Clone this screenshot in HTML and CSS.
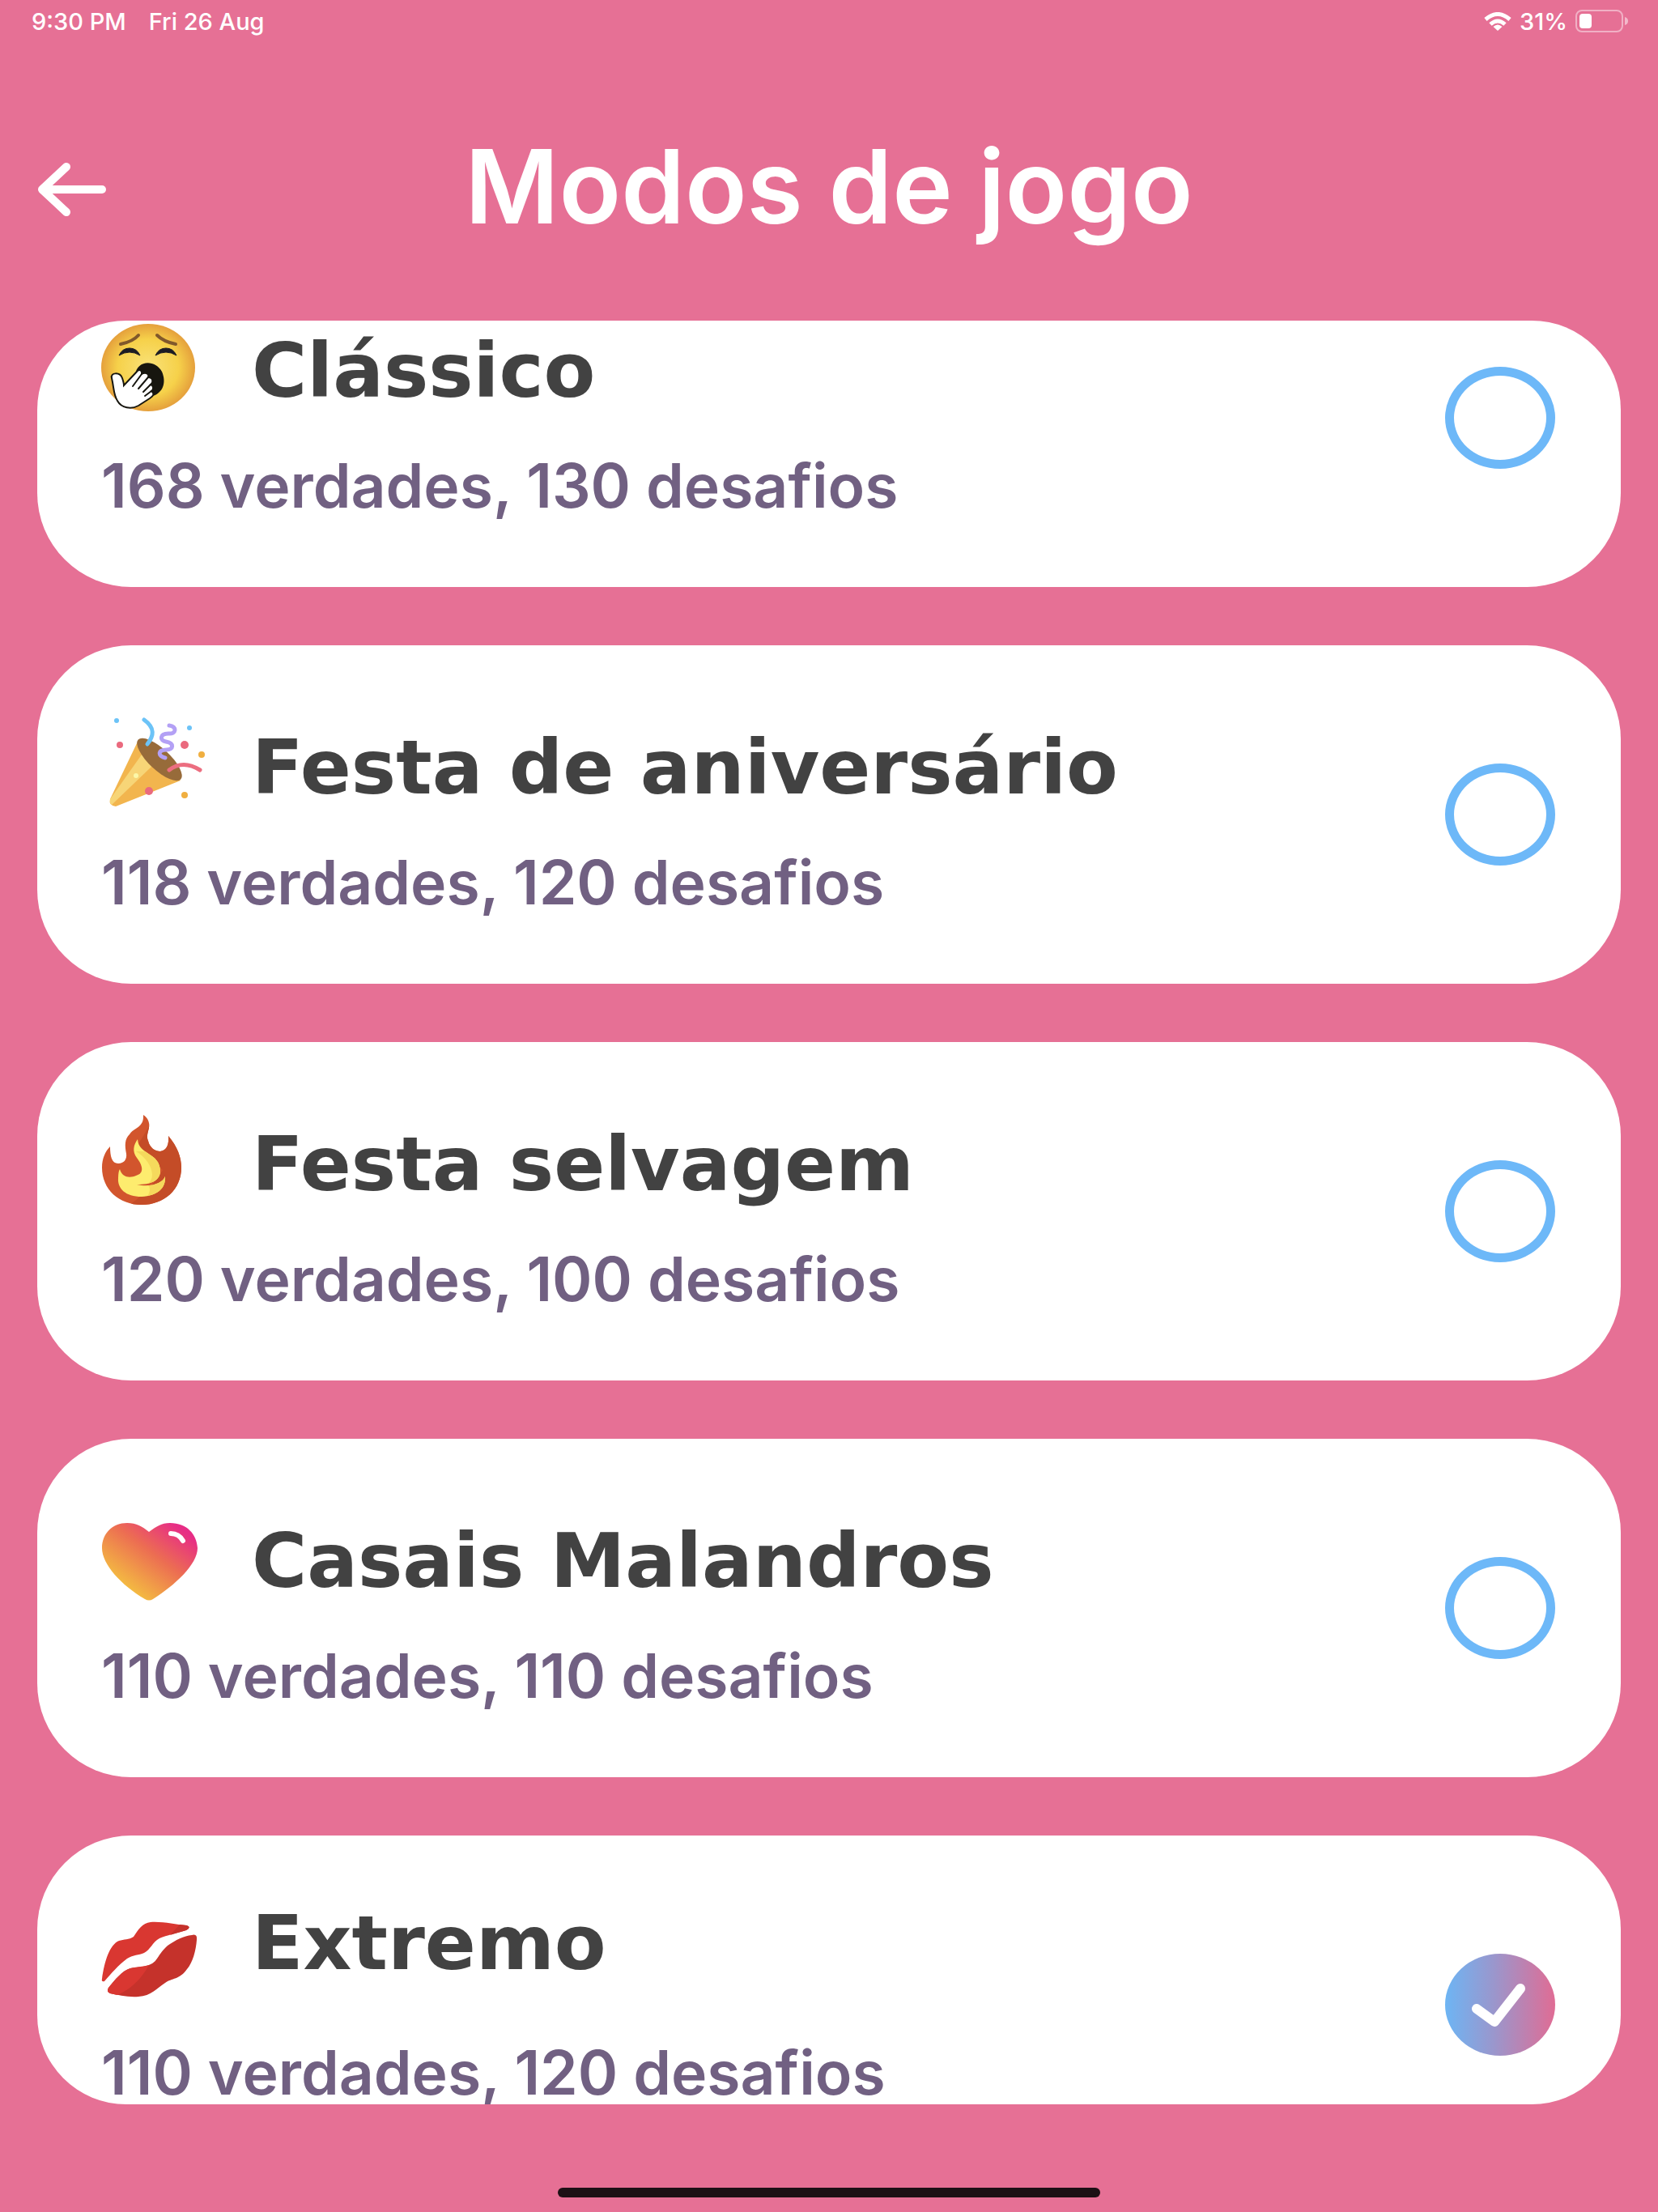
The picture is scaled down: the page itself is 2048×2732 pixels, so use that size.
FILE: index.html
```html
<!DOCTYPE html>
<html lang="pt">

<head>
    <meta charset="UTF-8"/>
    <meta name="viewport" content="width=device-width, initial-scale=1.0"/>
    <title>Modos de jogo</title>
    <link rel="stylesheet" href="styles.css">
</head>

<body>
<div class="status-bar">
    <div class="status-left">
        <span>9:30 PM</span>
        <span>Fri 26 Aug</span>
    </div>
    <div class="status-right">
        <svg class="wifi" viewBox="0 0 34 23" fill="none" stroke="#fff" stroke-width="5">
            <path d="M2 9 Q17 -4 32 9"/>
            <path d="M8 15 Q17 7 26 15"/>
            <path d="M17 23 L11.500 18 Q17 13 22.500 18 Z" fill="#fff" stroke="none"/>
        </svg>
        <span>31%</span>
        <svg class="battery" viewBox="0 0 66 28">
            <rect x="1" y="1" width="57" height="26" rx="7" fill="none" stroke="#fff" stroke-opacity=".45" stroke-width="2"/>
            <rect x="5" y="5" width="15" height="18" rx="4" fill="#fff"/>
            <path d="M61 9 Q65 10 65 14 Q65 18 61 19 Z" fill="#fff" fill-opacity=".5"/>
        </svg>
    </div>
</div>

<header class="header">
    <button class="back" aria-label="Voltar">
        <svg viewBox="0 0 86 68" fill="none" stroke="#fff" stroke-width="10" stroke-linecap="round" stroke-linejoin="round">
            <path d="M36 6 L6 34 L36 62"/>
            <path d="M8 34 H80"/>
        </svg>
    </button>
    <h1>Modos de jogo</h1>
</header>

<main class="modes">
    <label class="mode">
        <span class="mode-info">
            <span class="mode-head">
                <svg class="mode-icon" viewBox="0 0 120 112">
                    <defs>
                        <radialGradient id="face">
                            <stop offset="0" stop-color="#f9e27a"/>
                            <stop offset=".65" stop-color="#f6d14a"/>
                            <stop offset="1" stop-color="#e5a03c"/>
                        </radialGradient>
                    </defs>
                    <ellipse cx="58" cy="57" rx="58" ry="54" fill="url(#face)"/>
                    <g fill="none" stroke="#80582b" stroke-width="4" stroke-linecap="round">
                        <path d="M24 28 Q39 25 46 17"/>
                        <path d="M92 28 Q77 25 69 17"/>
                    </g>
                    <path d="M22 42 Q26 33 35 33 Q44 33 48 42 Q35 34 22 42 Z" fill="#1c1c24" stroke="#1c1c24" stroke-width="1"/>
                    <path d="M67 42 Q71 33 80 33 Q89 33 93 42 Q80 34 67 42 Z" fill="#1c1c24" stroke="#1c1c24" stroke-width="1"/>
                    <path d="M42 66 C44 47 67 47 75 62 C81 76 76 88 64 92 L48 98 Z" fill="#17160f"/>
                    <path d="M13 70 C11 63 23 62 26 70 Q28 76 28 79 L44 62 C47 58 51 61 50 65 C55 62 60 65 58 69 C64 69 65 75 61 78 C65 79 65 84 62 86 C66 89 65 92 60 95 L46 104 C37 109 25 107 20 98 C15 90 16 83 13 70 Z" fill="#fff" stroke="#17160f" stroke-width="2"/>
                    <path d="M50 65 L39 80 M58 69 L46 83 M61 78 L52 87 M62 86 L54 92" fill="none" stroke="#17160f" stroke-width="2" stroke-linecap="round"/>
                </svg>
                <span class="mode-title">Clássico</span>
            </span>
            <span class="mode-count">168 verdades, 130 desafios</span>
        </span>
        <span class="mode-check"><input type="radio" name="mode"></span>
    </label>

    <label class="mode">
        <span class="mode-info">
            <span class="mode-head">
                <svg class="mode-icon" viewBox="0 0 120 112">
                    <path d="M45 29 L11 100 Q9 108 18 109 L98 77 Z" fill="#f2b54e"/>
                    <path d="M50 45 L62 60 L13 107 Q10 105 11 100 Z" fill="#f7d577"/>
                    <ellipse cx="72" cy="51" rx="36" ry="13" transform="rotate(43 72 51)" fill="#976b3a"/>
                    <g fill="none" stroke-width="5" stroke-linecap="round">
                        <path d="M53 2 C67 12 65 22 57 32" stroke="#6cc3f7"/>
                        <path d="M84 9 C94 10 93 20 83 19 C72 19 72 28 80 29 C91 31 89 39 81 39 C69 39 70 47 79 49" stroke="#b3a0f5"/>
                        <path d="M84 64 Q101 51 122 64" stroke="#ec6e80"/>
                    </g>
                    <circle cx="19" cy="3" r="3" fill="#6cc3f7"/>
                    <circle cx="109" cy="12" r="3" fill="#6cc3f7"/>
                    <circle cx="23" cy="33" r="4" fill="#ea6a7e"/>
                    <circle cx="103" cy="33" r="5" fill="#ea6a7e"/>
                    <circle cx="59" cy="90" r="5" fill="#ea6a7e"/>
                    <circle cx="124" cy="45" r="4" fill="#f0af40"/>
                    <circle cx="103" cy="95" r="4" fill="#f0af40"/>
                    <circle cx="43" cy="71" r="3" fill="#fbf7a8"/>
                </svg>
                <span class="mode-title">Festa de aniversário</span>
            </span>
            <span class="mode-count">118 verdades, 120 desafios</span>
        </span>
        <span class="mode-check"><input type="radio" name="mode"></span>
    </label>

    <label class="mode">
        <span class="mode-info">
            <span class="mode-head">
                <svg class="mode-icon" viewBox="0 0 120 112">
                    <defs>
                        <clipPath id="flame">
                            <path d="M52 0 C58 4 60 9 59 16 C57 24 56 27 58 32 C60 41 67 45 73 45 C81 44 84 36 83 26 C94 39 99 52 99 65 C99 92 78 111 50 111 C22 111 1 92 1 65 C1 54 5 45 11 39 C11 51 13 60 21 60 C28 60 32 55 31 48 C29 37 29 30 35 24 C41 15 53 16 52 0 Z"/>
                        </clipPath>
                        <clipPath id="flame-core">
                            <path d="M45 30 C46 50 73 46 73 70 C72 82 61 86 44 86 C62 90 76 84 79 76 C80 91 69 100 50 101 C30 101 20 91 21 78 Q21 70 23 67 C26 78 36 78 43 75 C54 72 51 62 44 53 C38 45 40 37 45 30 Z"/>
                        </clipPath>
                    </defs>
                    <g clip-path="url(#flame)">
                        <path d="M0 0 H120 V112 H0 Z" fill="#d2552d"/>
                        <path d="M59 14 Q50 30 44 38 L76 68 Q64 90 34 112 H120 V0 H59 Z" fill="#c44c27"/>
                    </g>
                    <g clip-path="url(#flame-core)">
                        <path d="M0 0 H120 V112 H0 Z" fill="#fdec6e"/>
                        <path d="M43 45 C60 55 70 76 57 86 Q63 91 57 101 H90 V45 Z" fill="#f5d95c"/>
                    </g>
                </svg>
                <span class="mode-title">Festa selvagem</span>
            </span>
            <span class="mode-count">120 verdades, 100 desafios</span>
        </span>
        <span class="mode-check"><input type="radio" name="mode"></span>
    </label>

    <label class="mode">
        <span class="mode-info">
            <span class="mode-head">
                <svg class="mode-icon" viewBox="0 0 120 112">
                    <defs>
                        <linearGradient id="love" x1="0.2" y1="0.8" x2="0.85" y2="0.1">
                            <stop offset="0" stop-color="#f4bd41"/>
                            <stop offset=".55" stop-color="#ec6d52"/>
                            <stop offset="1" stop-color="#e72d85"/>
                        </linearGradient>
                    </defs>
                    <path d="M59 25 C50 18 44 14 32 14 C14 14 1 27 1 45 C1 65 25 91 54 108 Q59 111 64 108 C91 91 119 65 119 45 C118 28 106 14 85 14 C74 14 69 18 59 25 Z" fill="url(#love)"/>
                    <path d="M86 27 Q96 27 101 36" fill="none" stroke="#fff" stroke-width="6" stroke-linecap="round"/>
                </svg>
                <span class="mode-title">Casais Malandros</span>
            </span>
            <span class="mode-count">110 verdades, 110 desafios</span>
        </span>
        <span class="mode-check"><input type="radio" name="mode"></span>
    </label>

    <label class="mode">
        <span class="mode-info">
            <span class="mode-head mode-head-raised">
                <svg class="mode-icon" viewBox="0 0 120 112">
                    <path d="M1 87 C4 66 10 45 22 40 C28 38 34 39 40 35 C46 26 51 18 61 17 C76 16 92 20 105 21 Q112 23 105 27 C91 31 82 33 72 37 C63 42 61 51 53 55 C46 58 40 57 32 62 C21 70 12 81 4 90 Q0 91 1 87 Z" fill="#d93731"/>
                    <path d="M85 33 L97 20 L106 21 Q112 23 105 27 Z" fill="#c5322b"/>
                    <path d="M112 33 Q119 31 118 39 C117 52 113 67 106 75 C97 88 87 86 79 92 C68 99 62 108 46 109 C33 110 21 107 11 105 Q6 103 9 98 C17 88 26 77 36 74 C46 72 55 73 63 68 C70 64 70 57 82 46 C92 39 102 34 112 33 Z" fill="#c5322b"/>
                    <path d="M20 107 Q45 96 59 70 C52 72 45 72 36 74 C26 77 17 88 9 98 Q6 103 11 105 Z" fill="#d93731"/>
                </svg>
                <span class="mode-title">Extremo</span>
            </span>
            <span class="mode-count">110 verdades, 120 desafios</span>
        </span>
        <span class="mode-check">
            <input type="radio" name="mode" checked>
            <svg viewBox="0 0 136 126" fill="none" stroke="#fff" stroke-width="12" stroke-linecap="round" stroke-linejoin="round">
                <path d="M39 68 L61 84 L93 43"/>
            </svg>
        </span>
    </label>
</main>

<footer class="home">
    <div class="home-bar"></div>
</footer>

<script>
    document.querySelector('.modes').scrollTop = 89
</script>
</body>
</html>
```

FILE: styles.css
```css
* {
    box-sizing: border-box;
}

body {
    margin: 0;
    height: 100vh;
    display: flex;
    flex-direction: column;
    background: #e67095;
    color: #fff;
    font-family: Inter, "Liberation Sans", sans-serif;
}

.status-bar {
    height: 54px;
    padding: 0 36px 2px 39px;
    display: flex;
    justify-content: space-between;
    align-items: center;
    font-size: 29px;
    font-weight: 500;
}

.status-left {
    display: flex;
    gap: 28px;
}

.status-right {
    display: flex;
    align-items: center;
    gap: 10px;
}

.wifi {
    width: 34px;
    height: 23px;
}

.battery {
    width: 66px;
    height: 28px;
}

.header {
    padding: 112px 46px 94px;
    display: grid;
    grid-template-columns: 1fr auto 1fr;
    align-items: center;
}

.header h1 {
    margin: 0;
    padding-bottom: 8px;
    font-size: 126px;
    line-height: 128px;
    font-weight: 600;
}

.back {
    width: 86px;
    height: 68px;
    padding: 0;
    border: none;
    background: none;
    cursor: pointer;
}

.back svg {
    display: block;
}

/* scrolling list, clipped to its own rounded corners */
.modes {
    flex: 1;
    min-height: 0;
    margin: 0 46px;
    border-radius: 110px;
    overflow-y: auto;
    scrollbar-width: none;
    display: flex;
    flex-direction: column;
    gap: 72px;
}

.mode {
    flex-shrink: 0;
    min-height: 418px;
    display: flex;
    justify-content: space-between;
    align-items: center;
    padding: 0 81px 0 79px;
    border-radius: 116px;
    background: #fff;
    cursor: pointer;
}

.mode-info {
    align-self: flex-start;
    padding: 82px 0;
}

.mode-info,
.mode-title,
.mode-count {
    display: block;
}

.mode-head {
    height: 120px;
    display: flex;
    align-items: flex-end;
    gap: 66px;
}

.mode-icon {
    width: 120px;
    height: 112px;
    overflow: visible;
}

.mode-title {
    color: #424242;
    font-family: "DejaVu Sans", Verdana, sans-serif;
    font-size: 93px;
    line-height: 102px;
    font-weight: 700;
}

.mode-head-raised .mode-title {
    align-self: flex-start;
}

.mode-count {
    margin-top: 52px;
    color: #716082;
    font-size: 75px;
    line-height: 78px;
    font-weight: 600;
}

.mode-check {
    display: grid;
}

.mode-check input,
.mode-check svg {
    grid-area: 1 / 1;
    width: 136px;
    height: 126px;
    margin: 0;
}

.mode-check input {
    appearance: none;
    border: 11px solid #6db8f8;
    border-radius: 50%;
    cursor: pointer;
}

.mode-check input:checked {
    border: none;
    background: linear-gradient(90deg, #6db5f4, #9b96cc 45%, #e06c94);
}

.mode-check svg {
    pointer-events: none;
}

.home {
    height: 133px;
    padding-bottom: 18px;
    display: flex;
    justify-content: center;
    align-items: flex-end;
}

.home-bar {
    width: 670px;
    height: 12px;
    border-radius: 6px;
    background: #1d1015;
}
```
